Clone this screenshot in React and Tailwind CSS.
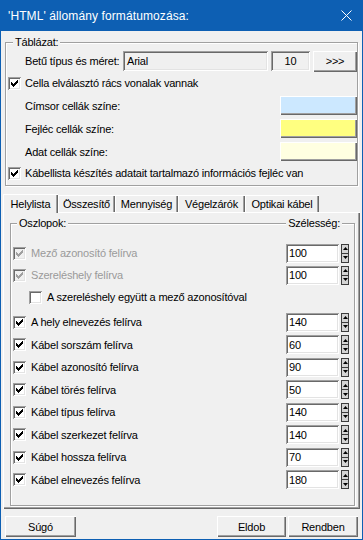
import React from 'react'

const SUNKEN =
  'shadow-[inset_1px_1px_0_#a0a0a0,inset_-1px_-1px_0_#ffffff,inset_2px_2px_0_#696969,inset_-2px_-2px_0_#e3e3e3]'
const RAISED =
  'shadow-[inset_1px_1px_0_#ffffff,inset_-1px_-1px_0_#696969,inset_-2px_-2px_0_#a0a0a0]'

const COLUMNS = [
  { label: 'A hely elnevezés felírva', value: '140', h: 'h-[22px]' },
  { label: 'Kábel sorszám felírva', value: '60', h: 'h-[23px]' },
  { label: 'Kábel azonosító felírva', value: '90', h: 'h-[22px]' },
  { label: 'Kábel törés felírva', value: '50', h: 'h-[23px]' },
  { label: 'Kábel típus felírva', value: '140', h: 'h-[22px]' },
  { label: 'Kábel szerkezet felírva', value: '140', h: 'h-[23px]' },
  { label: 'Kábel hossza felírva', value: '70', h: 'h-[22px]' },
  { label: 'Kábel elnevezés felírva', value: '180', h: 'h-[23px]' },
]

const TABS = [
  { label: 'Helylista', w: 'w-[55px]', active: true },
  { label: 'Összesítő', w: 'w-[57px]' },
  { label: 'Mennyiség', w: 'w-[63px]' },
  { label: 'Végelzárók', w: 'w-[67px]' },
  { label: 'Optikai kábel', w: 'w-[74px]' },
]

function Check({ checked = true, disabled = false }) {
  const fill = disabled ? '#a0a0a0' : '#000000'
  return (
    <span
      className={`w-[13px] h-[13px] shrink-0 flex items-center justify-center ${SUNKEN} ${
        disabled ? 'bg-[#f0f0f0]' : 'bg-white'
      }`}
    >
      {checked && (
        <svg width="7" height="7" viewBox="0 0 7 7" shapeRendering="crispEdges">
          <rect x="6" y="0" width="1" height="1" fill={fill} />
          <rect x="5" y="1" width="2" height="1" fill={fill} />
          <rect x="0" y="2" width="1" height="1" fill={fill} />
          <rect x="4" y="2" width="3" height="1" fill={fill} />
          <rect x="0" y="3" width="2" height="1" fill={fill} />
          <rect x="3" y="3" width="3" height="1" fill={fill} />
          <rect x="0" y="4" width="5" height="1" fill={fill} />
          <rect x="1" y="5" width="3" height="1" fill={fill} />
          <rect x="2" y="6" width="1" height="1" fill={fill} />
        </svg>
      )}
    </span>
  )
}

function Spin({ value }) {
  return (
    <div className="flex items-center gap-[2px]">
      <div className={`w-[53px] h-[19px] bg-white ${SUNKEN} flex items-center pl-[3px] text-black`}>
        {value}
      </div>
      <div className="w-[8px] h-[19px] flex flex-col">
        <div className="flex-1 bg-[#d4d4d4] border border-[#3c3c3c] flex items-center justify-center">
          <svg width="5" height="3" viewBox="0 0 5 3">
            <polygon points="2.5,0 5,3 0,3" fill="#000" />
          </svg>
        </div>
        <div className="flex-1 bg-[#d4d4d4] border border-t-0 border-[#3c3c3c] flex items-center justify-center">
          <svg width="5" height="3" viewBox="0 0 5 3">
            <polygon points="0,0 5,0 2.5,3" fill="#000" />
          </svg>
        </div>
      </div>
    </div>
  )
}

function Etch({ className = '' }) {
  return <span className={`h-px bg-[#a0a0a0] shadow-[0_1px_0_#ffffff] ${className}`} />
}

function Button({ children, w }) {
  return (
    <div className={`${w} h-[21px] ${RAISED} bg-[#f0f0f0] flex items-center justify-center`}>
      {children}
    </div>
  )
}

export default function App() {
  return (
    <div className="w-[363px] h-[540px] bg-[#0d5fb3] flex flex-col font-['Liberation_Sans',Arial,sans-serif] text-[11px] leading-[14px] tracking-[-0.2px] whitespace-nowrap text-black">
      {/* Title bar */}
      <div className="h-[31px] shrink-0 flex items-center justify-between pl-[8px] pr-[11px] text-white">
        <span className="text-[12px] tracking-[0.1px]">'HTML' állomány formátumozása:</span>
        <svg width="11" height="11" viewBox="0 0 11 11">
          <path d="M0.5 0.5 L10.5 10.5 M10.5 0.5 L0.5 10.5" stroke="#fff" strokeWidth="1" />
        </svg>
      </div>

      <div className="flex-1 mx-[1px] mb-[1px] bg-[#f0f0f0] flex flex-col">
        {/* Táblázat */}
        <fieldset className="mt-[4px] mx-[4px] border border-[#a0a0a0] shadow-[inset_1px_1px_0_#ffffff,1px_1px_0_#ffffff]">
          <legend className="ml-[7px] px-[2px] bg-[#f0f0f0]">Táblázat:</legend>
          <div className="mt-[2px] h-[20px] flex items-center pl-[19px]">
            <span className="w-[98px]">Betű típus és méret:</span>
            <div className={`w-[145px] h-[20px] ${SUNKEN} flex items-center pl-[4px]`}>Arial</div>
            <div className={`ml-[3px] w-[39px] h-[20px] ${SUNKEN} flex items-center justify-center`}>10</div>
            <div className="ml-[3px]">
              <Button w="w-[44px]">&gt;&gt;&gt;</Button>
            </div>
          </div>
          <div className="h-[24px] flex items-center gap-[4px] pl-[2px]">
            <Check />
            <span>Cella elválasztó rács vonalak vannak</span>
          </div>
          <div className="mt-[1px] h-[19px] flex items-center justify-between pl-[19px]">
            <span>Címsor cellák színe:</span>
            <div className={`w-[77px] h-[19px] bg-[#cce8ff] ${RAISED}`} />
          </div>
          <div className="mt-[4px] h-[19px] flex items-center justify-between pl-[19px]">
            <span>Fejléc cellák színe:</span>
            <div className={`w-[77px] h-[19px] bg-[#ffff80] ${RAISED}`} />
          </div>
          <div className="mt-[4px] h-[19px] flex items-center justify-between pl-[19px]">
            <span>Adat cellák színe:</span>
            <div className={`w-[77px] h-[19px] bg-[#ffffe1] ${RAISED}`} />
          </div>
          <div className="h-[24px] flex items-center gap-[4px] pl-[2px]">
            <Check />
            <span>Kábellista készítés adatait tartalmazó információs fejléc van</span>
          </div>
        </fieldset>

        {/* Tabs */}
        <div className="mt-[8px] mx-[2px] flex items-end relative z-10">
          {TABS.map((t) => (
            <div
              key={t.label}
              className={`${t.w} flex items-center justify-center bg-[#f0f0f0] shadow-[inset_1px_1px_0_#ffffff,inset_-1px_0_0_#696969,inset_-2px_0_0_#a0a0a0] ${
                t.active ? 'h-[19px] -mb-[1px]' : 'h-[17px] mb-0'
              }`}
            >
              {t.label}
            </div>
          ))}
        </div>

        {/* Tab panel */}
        <div className="mx-[2px] h-[297px] shadow-[inset_1px_1px_0_#ffffff,inset_-1px_-1px_0_#696969,inset_-2px_-2px_0_#a0a0a0] flex flex-col">
          <fieldset className="mt-[4px] ml-[7px] mr-[5px] border border-[#a0a0a0] shadow-[inset_1px_1px_0_#ffffff,1px_1px_0_#ffffff]">
            <legend className="mx-[6px] w-[calc(100%-12px)] flex items-center bg-[#f0f0f0]">
              <span className="px-[2px]">Oszlopok:</span>
              <Etch className="flex-1" />
              <span className="px-[2px]">Szélesség:</span>
              <Etch className="w-[6px]" />
            </legend>

            <div className="mt-[12px] h-[22px] flex items-center justify-between pl-[2px] pr-[5px]">
              <div className="flex items-center gap-[5px] text-[#9a9a9a]">
                <Check disabled />
                <span>Mező azonosító felírva</span>
              </div>
              <Spin value="100" />
            </div>
            <div className="h-[22px] flex items-center justify-between pl-[2px] pr-[5px]">
              <div className="flex items-center gap-[5px] text-[#9a9a9a]">
                <Check disabled />
                <span>Szereléshely felírva</span>
              </div>
              <Spin value="100" />
            </div>
            <div className="h-[22px] flex items-center gap-[5px] pl-[18px]">
              <Check checked={false} />
              <span>A szereléshely együtt a mező azonosítóval</span>
            </div>

            <div className="mt-[3px] flex flex-col pb-[14px]">
              {COLUMNS.map((c) => (
                <div key={c.label} className={`${c.h} flex items-center justify-between pl-[2px] pr-[5px]`}>
                  <div className="flex items-center gap-[5px]">
                    <Check />
                    <span>{c.label}</span>
                  </div>
                  <Spin value={c.value} />
                </div>
              ))}
            </div>
          </fieldset>
        </div>

        {/* Bottom buttons */}
        <div className="mt-[7px] px-[4px] flex items-center">
          <Button w="w-[71px]">Súgó</Button>
          <div className="flex-1" />
          <Button w="w-[69px]">Eldob</Button>
          <div className="ml-[2px]">
            <Button w="w-[70px]">Rendben</Button>
          </div>
        </div>
      </div>
    </div>
  )
}
